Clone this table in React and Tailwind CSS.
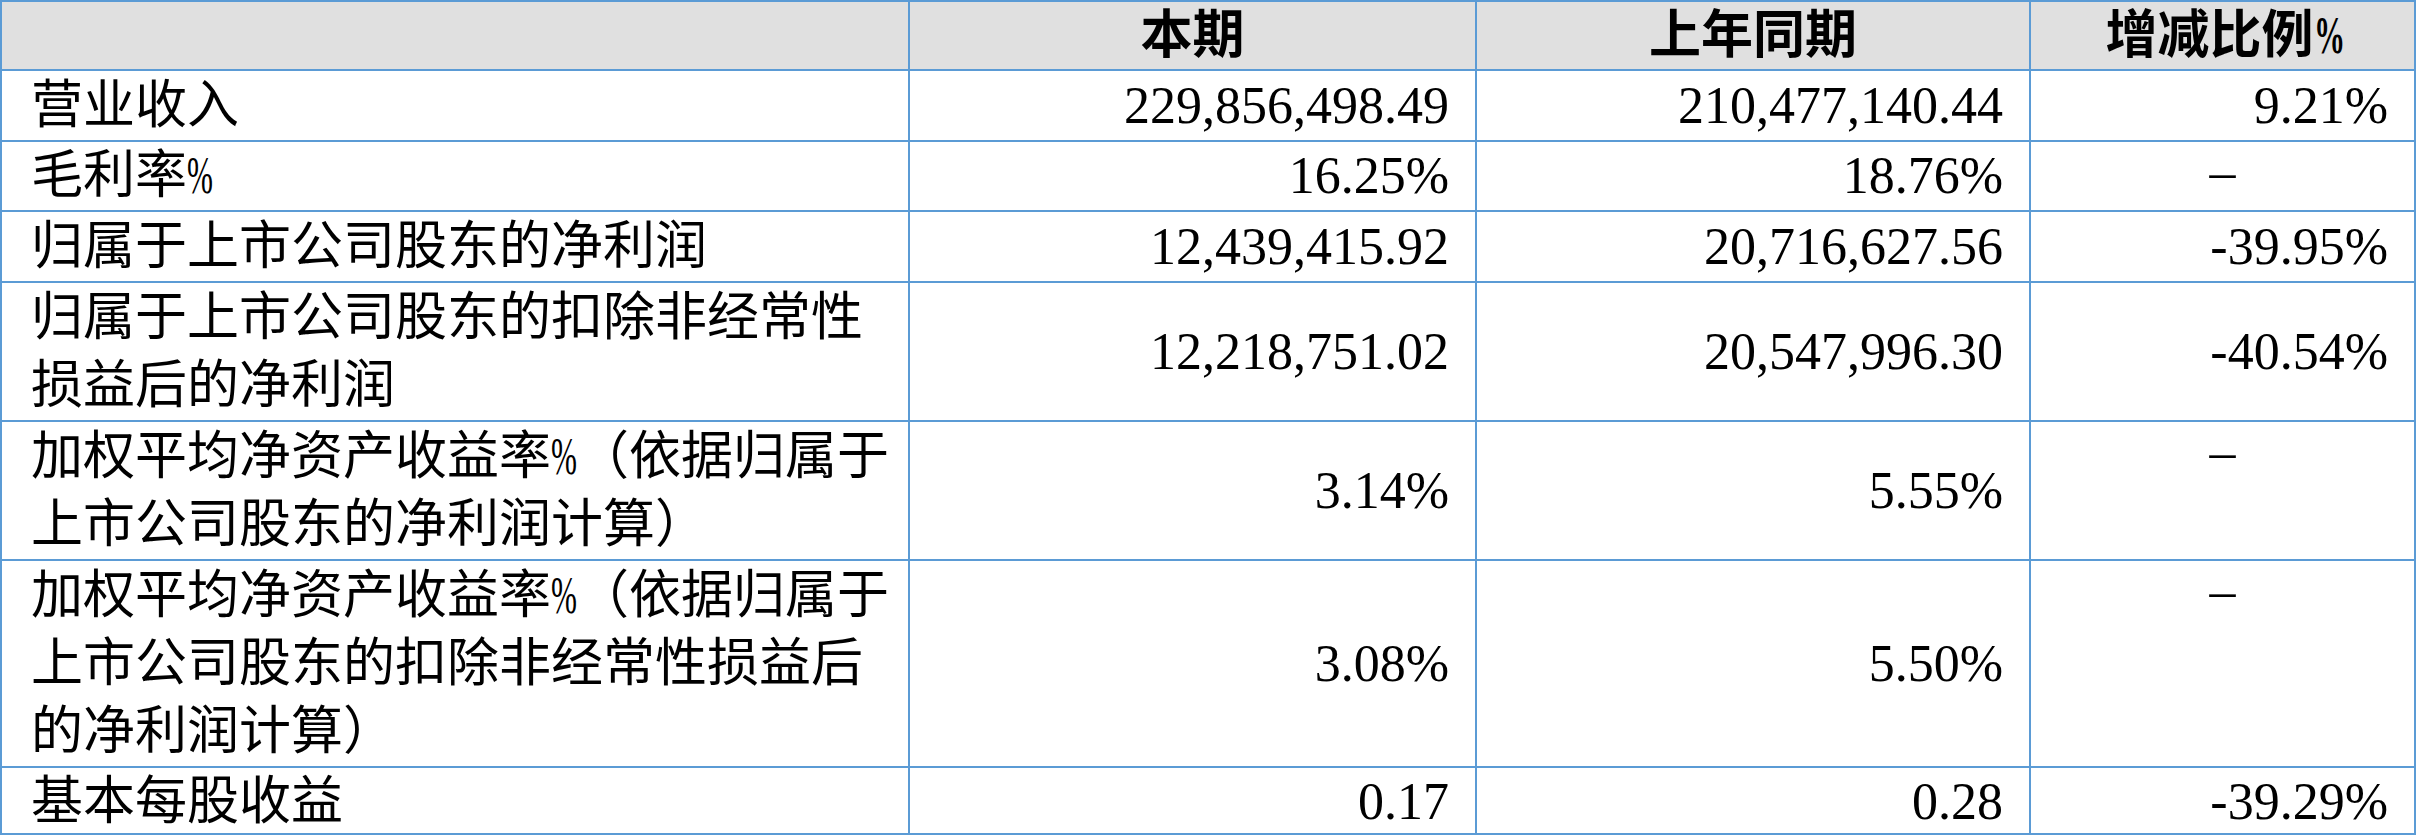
import React from 'react';

const rows = [
  { label: ['营业收入'], cur: '229,856,498.49', prev: '210,477,140.44', change: '9.21%', h: 'h-[71px]' },
  { label: ['毛利率%'], cur: '16.25%', prev: '18.76%', change: '–', h: 'h-[70px]' },
  { label: ['归属于上市公司股东的净利润'], cur: '12,439,415.92', prev: '20,716,627.56', change: '-39.95%', h: 'h-[71px]' },
  {
    label: ['归属于上市公司股东的扣除非经常性', '损益后的净利润'],
    cur: '12,218,751.02',
    prev: '20,547,996.30',
    change: '-40.54%',
    h: 'h-[139px]',
  },
  {
    label: ['加权平均净资产收益率%（依据归属于', '上市公司股东的净利润计算）'],
    cur: '3.14%',
    prev: '5.55%',
    change: '–',
    top: true,
    h: 'h-[139px]',
  },
  {
    label: ['加权平均净资产收益率%（依据归属于', '上市公司股东的扣除非经常性损益后', '的净利润计算）'],
    cur: '3.08%',
    prev: '5.50%',
    change: '–',
    top: true,
    h: 'h-[207px]',
  },
  { label: ['基本每股收益'], cur: '0.17', prev: '0.28', change: '-39.29%', h: 'h-[67px]' },
];

const grid = 'grid grid-cols-[908px_567px_554px_385px] border-b-2 border-[#5b9bd5]';
const cell = 'flex items-center border-r-2 border-[#5b9bd5]';

// the % inside chinese text is a half-width glyph in the original
const Cn = ({ text }) => {
  const parts = text.split('%');
  return parts.map((p, i) => (
    <React.Fragment key={i}>
      {p}
      {i < parts.length - 1 && (
        <span className="inline-block w-[26px] origin-left scale-x-[0.6]">%</span>
      )}
    </React.Fragment>
  ));
};

const App = () => {
  return (
    <div
      className="w-[2416px] bg-white text-black text-[52px] leading-[68px]"
      style={{ fontFamily: '"Liberation Serif", "Noto Sans CJK SC", serif' }}
    >
      <div className="border-t-2 border-l-2 border-[#5b9bd5]">
        {/* header */}
        <div className={`${grid} h-[69px] bg-[#e0e0e0] font-bold`}>
          <div className={cell}></div>
          <div className={`${cell} justify-center`}>本期</div>
          <div className={`${cell} justify-center`}>上年同期</div>
          <div className={`${cell} justify-center`}>
            <span>
              <Cn text="增减比例%" />
            </span>
          </div>
        </div>

        {rows.map((r, i) => (
          <div key={i} className={`${grid} ${r.h}`}>
            <div className={`${cell} pl-[29px] whitespace-nowrap`}>
              <div>
                {r.label.map((l, j) => (
                  <div key={j}>
                    <Cn text={l} />
                  </div>
                ))}
              </div>
            </div>
            <div className={`${cell} justify-end pr-[26px]`}>{r.cur}</div>
            <div className={`${cell} justify-end pr-[26px]`}>{r.prev}</div>
            {r.change === '–' ? (
              <div className={`flex justify-center border-r-2 border-[#5b9bd5] ${r.top ? 'items-start' : 'items-center'}`}>
                <span className="relative -top-[4px]">–</span>
              </div>
            ) : (
              <div className={`${cell} justify-end pr-[26px]`}>{r.change}</div>
            )}
          </div>
        ))}
      </div>
    </div>
  );
};

export default App;
